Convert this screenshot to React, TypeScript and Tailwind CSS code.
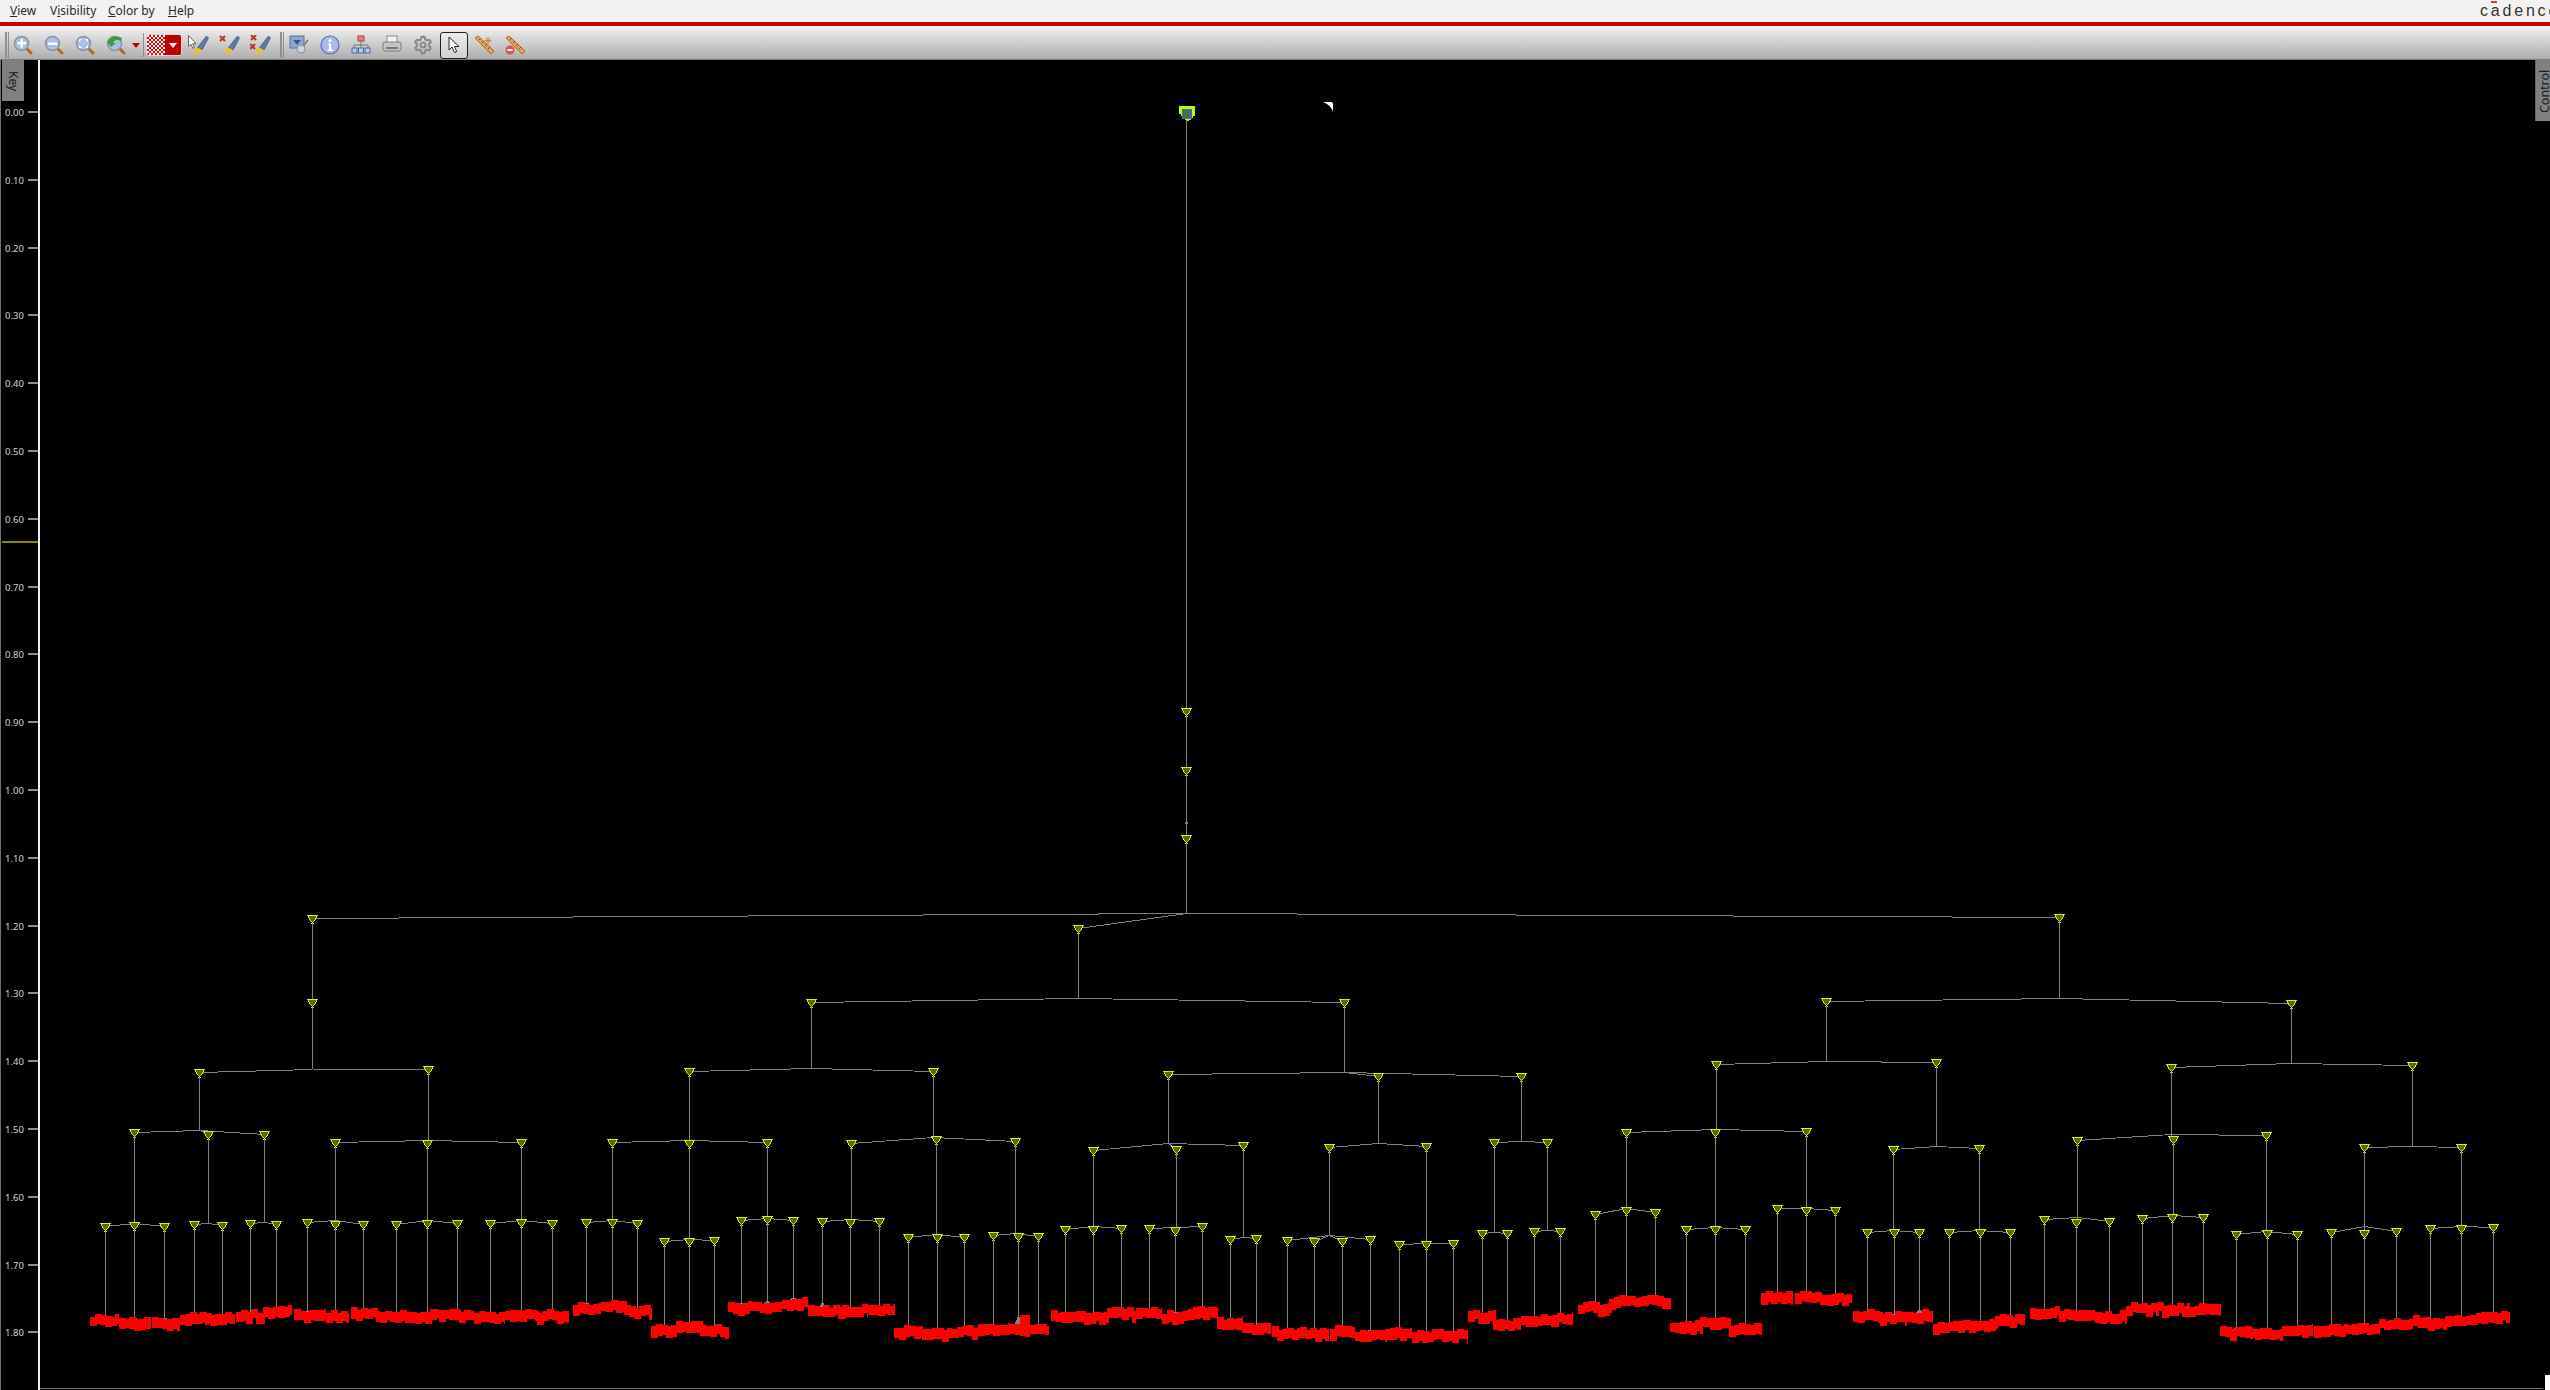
import { Settings } from "lucide-react"

type Leaf = { top: number; a: number; b: number; ry: number }
type TreeNode = { x: number; y: number; j?: number; kids?: TreeNode[]; leaf?: Leaf }

const n = (x: number, y: number, j: number, kids: TreeNode[]): TreeNode => ({ x, y, j, kids })
const l = (x: number, y: number, top: number, a: number, b: number, ry: number): TreeNode => ({
  x,
  y,
  leaf: { top, a, b, ry },
})

// clock tree, all coordinates are page pixels read off the screenshot
const tree: TreeNode = n(1186, 112, 708, [
  n(1186, 712, 767, [
    n(1186, 771, 835, [
      n(1186, 839, 913, [
        n(312, 919, 999, [
          n(312, 1003, 1069, [
            n(199, 1073, 1130, [
              n(134, 1133, 1223, [
                l(105, 1227, 1315, 90, 119, 1320),
                l(134, 1226, 1317, 119, 151, 1323),
                l(164, 1227, 1317, 152, 180, 1323),
              ]),
              n(208, 1135, 1223, [l(194, 1225, 1315, 180, 209, 1318), l(222, 1226, 1314, 205, 235, 1319)]),
              n(264, 1135, 1222, [l(250, 1224, 1312, 236, 265, 1316), l(276, 1225, 1308, 263, 292, 1312)]),
            ]),
            n(428, 1070, 1140, [
              n(335, 1143, 1220, [
                l(307, 1223, 1311, 294, 326, 1315),
                l(335, 1225, 1312, 326, 349, 1316),
                l(363, 1225, 1311, 351, 380, 1314),
              ]),
              n(427, 1144, 1220, [
                l(396, 1225, 1312, 380, 410, 1316),
                l(427, 1224, 1313, 410, 439, 1316),
                l(457, 1224, 1310, 439, 474, 1315),
              ]),
              n(521, 1143, 1220, [
                l(490, 1224, 1313, 474, 505, 1317),
                l(521, 1223, 1312, 505, 539, 1315),
                l(552, 1224, 1312, 537, 569, 1316),
              ]),
            ]),
          ]),
        ]),
        n(1078, 929, 998, [
          n(811, 1003, 1068, [
            n(689, 1072, 1140, [
              n(612, 1143, 1220, [
                l(586, 1223, 1302, 573, 601, 1308),
                l(612, 1223, 1302, 601, 627, 1306),
                l(637, 1224, 1308, 624, 652, 1312),
              ]),
              n(689, 1144, 1239, [
                l(664, 1242, 1325, 651, 677, 1330),
                l(689, 1242, 1323, 676, 703, 1327),
                l(714, 1241, 1326, 700, 729, 1331),
              ]),
              n(767, 1143, 1218, [
                l(741, 1221, 1302, 728, 752, 1307),
                l(767, 1220, 1300, 750, 782, 1307),
                l(793, 1221, 1297, 782, 808, 1303),
              ]),
            ]),
            n(933, 1072, 1137, [
              n(851, 1144, 1219, [
                l(822, 1222, 1302, 808, 847, 1312),
                l(850, 1223, 1306, 842, 868, 1311),
                l(879, 1222, 1306, 868, 895, 1311),
              ]),
              n(936, 1140, 1234, [
                l(908, 1238, 1327, 894, 923, 1331),
                l(937, 1238, 1328, 922, 952, 1333),
                l(964, 1238, 1326, 952, 978, 1332),
              ]),
              n(1015, 1142, 1233, [
                l(993, 1236, 1327, 978, 1010, 1330),
                l(1018, 1237, 1315, 1010, 1030, 1330),
                l(1038, 1237, 1324, 1030, 1049, 1329),
              ]),
            ]),
          ]),
          n(1344, 1003, 1072, [
            n(1168, 1075, 1143, [
              n(1093, 1151, 1226, [
                l(1065, 1230, 1312, 1051, 1079, 1316),
                l(1093, 1230, 1312, 1079, 1109, 1317),
                l(1121, 1229, 1311, 1107, 1136, 1314),
              ]),
              n(1176, 1150, 1227, [
                l(1149, 1229, 1310, 1136, 1162, 1314),
                l(1175, 1231, 1311, 1162, 1188, 1317),
                l(1202, 1227, 1309, 1188, 1218, 1312),
              ]),
              n(1243, 1146, 1237, [l(1230, 1240, 1319, 1217, 1243, 1323), l(1256, 1239, 1325, 1242, 1271, 1329)]),
            ]),
            n(1378, 1077, 1143, [
              n(1329, 1148, 1235, [
                l(1287, 1241, 1329, 1272, 1300, 1333),
                l(1314, 1242, 1329, 1300, 1329, 1334),
                l(1342, 1242, 1327, 1330, 1355, 1332),
                l(1370, 1240, 1329, 1355, 1387, 1335),
              ]),
              n(1426, 1147, 1243, [
                l(1399, 1245, 1330, 1385, 1412, 1333),
                l(1426, 1245, 1330, 1412, 1437, 1336),
                l(1453, 1244, 1331, 1437, 1468, 1335),
              ]),
            ]),
            n(1521, 1077, 1141, [
              n(1494, 1143, 1232, [l(1482, 1234, 1313, 1468, 1496, 1317), l(1507, 1234, 1320, 1493, 1521, 1325)]),
              n(1547, 1143, 1230, [l(1534, 1232, 1317, 1521, 1553, 1321), l(1560, 1232, 1315, 1552, 1573, 1319)]),
            ]),
          ]),
        ]),
        n(2059, 918, 998, [
          n(1826, 1002, 1061, [
            n(1716, 1065, 1129, [
              n(1626, 1133, 1208, [
                l(1595, 1215, 1303, 1578, 1612, 1308),
                l(1626, 1211, 1298, 1609, 1643, 1302),
                l(1655, 1213, 1297, 1642, 1671, 1302),
              ]),
              n(1715, 1133, 1227, [
                l(1686, 1230, 1321, 1670, 1703, 1327),
                l(1715, 1230, 1318, 1700, 1731, 1323),
                l(1745, 1230, 1323, 1729, 1762, 1329),
              ]),
              n(1806, 1132, 1208, [
                l(1777, 1209, 1295, 1761, 1793, 1298),
                l(1806, 1211, 1293, 1795, 1822, 1298),
                l(1835, 1211, 1296, 1822, 1852, 1300),
              ]),
            ]),
            n(1936, 1063, 1146, [
              n(1893, 1150, 1230, [
                l(1867, 1233, 1312, 1853, 1883, 1316),
                l(1894, 1233, 1313, 1880, 1907, 1318),
                l(1919, 1233, 1309, 1907, 1933, 1316),
              ]),
              n(1979, 1149, 1230, [
                l(1949, 1233, 1322, 1933, 1966, 1327),
                l(1980, 1233, 1323, 1964, 1998, 1326),
                l(2010, 1233, 1315, 1995, 2025, 1320),
              ]),
            ]),
          ]),
          n(2291, 1004, 1063, [
            n(2171, 1068, 1134, [
              n(2077, 1141, 1217, [
                l(2044, 1220, 1308, 2030, 2060, 1313),
                l(2076, 1223, 1313, 2059, 2095, 1316),
                l(2109, 1222, 1313, 2095, 2127, 1317),
              ]),
              n(2173, 1140, 1215, [
                l(2142, 1219, 1304, 2126, 2159, 1309),
                l(2172, 1218, 1304, 2157, 2190, 1309),
                l(2203, 1218, 1305, 2189, 2221, 1310),
              ]),
              n(2266, 1136, 1231, [
                l(2236, 1235, 1327, 2220, 2253, 1332),
                l(2267, 1234, 1329, 2250, 2283, 1334),
                l(2297, 1235, 1327, 2282, 2313, 1330),
              ]),
            ]),
            n(2412, 1066, 1146, [
              n(2364, 1148, 1226, [
                l(2331, 1233, 1326, 2314, 2348, 1330),
                l(2364, 1234, 1323, 2347, 2380, 1328),
                l(2396, 1232, 1320, 2379, 2413, 1325),
              ]),
              n(2461, 1148, 1226, [
                l(2430, 1229, 1319, 2413, 2447, 1322),
                l(2461, 1229, 1317, 2445, 2478, 1321),
                l(2493, 1228, 1312, 2476, 2510, 1317),
              ]),
            ]),
          ]),
        ]),
      ]),
    ]),
  ]),
])

const nodes: TreeNode[] = []
const walk = (t: TreeNode) => {
  nodes.push(t)
  t.kids?.forEach(walk)
}
walk(tree)

const rand = (i: number) => {
  const v = Math.sin(i * 12.9898) * 43758.5453
  return v - Math.floor(v)
}

const ticks = Array.from({ length: 19 }, (_, i) => i)

// 9x9 buffer marker, pixel rows like the original raster symbol
function BufferMark({ x, y }: { x: number; y: number }) {
  const left = x - 4
  const top = y - 4
  return (
    <g>
      <path d={`M${left} ${top + 1}h9v2h-1v2h-1v1h-1v1h-3v-1h-1v-1h-1v-2h-1z`} fill="#556b00" />
      <path
        d={`M${left - 1} ${top}h11v1h-11zM${left} ${top + 1}h1v2h-1zM${left + 8} ${top + 1}h1v2h-1zM${left + 1} ${top + 3}h1v2h-1zM${left + 7} ${top + 3}h1v2h-1zM${left + 2} ${top + 5}h1v1h-1zM${left + 6} ${top + 5}h1v1h-1zM${left + 3} ${top + 6}h1v1h-1zM${left + 5} ${top + 6}h1v1h-1zM${left + 4} ${top + 7}h1v1h-1zM${left + 3} ${top + 8}h1v1h-1zM${left + 5} ${top + 8}h1v1h-1z`}
        fill="#c8ff00"
      />
    </g>
  )
}

function RedBand({ a, b, ry, seed }: { a: number; b: number; ry: number; seed: number }) {
  const cols = []
  for (let cx = a, i = 0; cx < b; cx += 5, i++) {
    const off = Math.round(rand(seed + i) * 4 - 2)
    const h = 9 + Math.round(rand(seed + i * 3 + 7) * 3)
    cols.push(<rect key={cx} x={cx} y={ry - 5 + off} width={Math.min(7, b - cx)} height={h} />)
  }
  return <g fill="#ff0000">{cols}</g>
}

function ClockTree() {
  return (
    <svg className="block absolute inset-0" width={2550} height={1330} viewBox="0 60 2550 1330">
      {/* axis */}
      <rect x={0} y={60} width={1} height={1330} fill="#707070" />
      <rect x={38} y={60} width={2} height={1330} fill="#f0f0f0" />
      <rect x={2} y={541} width={36} height={2} fill="#8a8a00" />
      <rect x={40} y={1388} width={2503} height={1} fill="#707070" />
      {ticks.map((i) => {
        const y = Math.round(112 + i * 67.8)
        return (
          <g key={i}>
            <rect x={28} y={y - 1} width={10} height={2} fill="#8c8c8c" />
            <text x={5} y={y + 3.5} fontSize={9.5} fill="#d4d4d4" fontFamily="'Noto Sans', sans-serif">
              {(i / 10).toFixed(2)}
            </text>
          </g>
        )
      })}

      <g shapeRendering="crispEdges">
        {/* wires */}
        <g stroke="#808080" strokeWidth={1}>
          {nodes.map((t, i) =>
            t.kids ? (
              <g key={i}>
                <line x1={t.x + 0.5} y1={t.y} x2={t.x + 0.5} y2={t.j} />
                {t.kids.map((k, m) => (
                  <line key={m} x1={t.x + 0.5} y1={(t.j as number) + 0.5} x2={k.x + 0.5} y2={k.y - (k.x === t.x ? 4 : 0.5)} />
                ))}
              </g>
            ) : (
              <line key={i} x1={t.x + 0.5} y1={t.y} x2={t.x + 0.5} y2={t.leaf?.top} />
            ),
          )}
        </g>

        {/* flops */}
        {nodes.map((t, i) =>
          t.leaf ? (
            <g key={i}>
              <polygon
                points={`${t.x - 5},${t.leaf.ry - 2} ${t.x + 0.5},${t.leaf.top} ${t.x + 6},${t.leaf.ry - 2}`}
                fill="#808080"
              />
              <RedBand a={t.leaf.a} b={t.leaf.b} ry={t.leaf.ry} seed={t.x} />
            </g>
          ) : null,
        )}
        <rect x={1020} y={1315} width={10} height={12} fill="#ff0000" />
        <rect x={1185} y={822} width={3} height={2} fill="#808080" />

        {nodes.slice(1).map((t, i) => (
          <BufferMark key={i} x={t.x} y={t.y} />
        ))}

        {/* root */}
        <path d="M1179 106h16v10h-2v2h-2v2h-2v1h-2v-1h-2v-2h-2v-2h-2v-2h-2z" fill="#b4ff00" />
        <rect x={1182} y={109} width={9} height={9} fill="#4c6a5c" stroke="#3f68c0" strokeWidth={1} />
      </g>

      {/* stray pointer mark */}
      <path d="M1323 102h8q2 0 2 2v8q-2-7-10-10z" fill="#ffffff" />
    </svg>
  )
}

function Mag({ children }: { children?: React.ReactNode }) {
  return (
    <svg width={20} height={20} viewBox="0 0 20 20">
      <line x1={12.5} y1={12.5} x2={18} y2={18} stroke="#b8681e" strokeWidth={3} strokeLinecap="round" />
      <circle cx={8.5} cy={8.5} r={7} fill="#a9c0e4" stroke="#8d939e" strokeWidth={1.5} />
      {children}
    </svg>
  )
}

function PenBody() {
  return (
    <g>
      <path d="M18.5 1 L20.5 3 L14 15 L9.5 12.5 Z" fill="#5f78a8" stroke="#3d5078" strokeWidth={0.7} />
      <path d="M9.5 12.5 L14 15 L10 18 L4 20 Z" fill="#f4c20d" />
    </g>
  )
}

const Cross = ({ x, y }: { x: number; y: number }) => (
  <path d={`M${x} ${y}l5 5m0-5l-5 5`} stroke="#b83a2c" strokeWidth={2.2} fill="none" />
)

function Ruler({ minus }: { minus?: boolean }) {
  return (
    <svg width={21} height={20} viewBox="0 0 21 20">
      <path d="M1 3 L4 1 L20 16 L17 19 Z" fill="#e0a060" stroke="#b8681e" strokeWidth={1} />
      <path d="M5 5l2-2M8 8l2-2M11 11l2-2M14 14l2-2" stroke="#8a4a12" strokeWidth={1} />
      {minus ? (
        <g>
          <circle cx={5} cy={15} r={4.5} fill="#d9534f" />
          <rect x={2.5} y={14} width={5} height={2} fill="#ffffff" />
        </g>
      ) : (
        <path d="M14 2v7M10.5 5.5h7M11.5 3l5 5M16.5 3l-5 5" stroke="#d8722a" strokeWidth={0.8} />
      )}
    </svg>
  )
}

function Grip() {
  return (
    <div className="flex gap-[1px] h-[26px] w-[4px]">
      <div className="w-[1.5px] bg-[#8f8f8f]" />
      <div className="w-[1.5px] bg-[#8f8f8f]" />
    </div>
  )
}

function Toolbar() {
  return (
    <div className="flex items-center h-[34px] pt-[5px] bg-gradient-to-b from-[#f2f2f2] to-[#aeaeae] border-b border-[#7a7a7a]">
      <div className="flex items-center gap-[11px] ml-[5px] w-[271px] shrink-0">
        <div className="-mr-[7px]">
          <Grip />
        </div>
        <Mag>
          <path d="M4.5 7h3V4h2.5v3h3v2.5h-3v3H7.5v-3h-3z" fill="#ffffff" />
        </Mag>
        <Mag>
          <rect x={4} y={7.5} width={9} height={2.5} fill="#ffffff" />
        </Mag>
        <Mag>
          <path d="M4 4h3L4 7zM13 4v3l-3-3zM4 13v-3l3 3zM13 13h-3l3-3z" fill="#ffffff" />
        </Mag>
        <Mag>
          <path d="M2 6 Q7 -1 16 3 L15 6 Q9 3 7 8 L10 8 L5 12 L1 7 Z" fill="#3f9a3a" />
        </Mag>
        <div className="flex items-center gap-[2px] -ml-[5px] -mr-[9px]">
          <svg width={8} height={5} viewBox="0 0 8 5">
            <path d="M0 0h8L4 5z" fill="#c00000" />
          </svg>
          <div className="w-[1px] h-[24px] bg-[#8f8f8f] ml-[1px]" />
        </div>
        <div className="flex w-[36px] h-[22px] rounded-[3px] overflow-hidden border border-[#d8d8d8] -mr-[5px]">
          <div className="flex-1 bg-[repeating-conic-gradient(#e60000_0_25%,#ffffff_0_50%)] bg-[length:4px_4px]" />
          <div className="w-[16px] bg-[#c00000] flex items-center justify-center">
            <svg width={8} height={5} viewBox="0 0 8 5">
              <path d="M0 0h8L4 5z" fill="#ffffff" />
            </svg>
          </div>
        </div>
        <svg width={21} height={20} viewBox="0 0 21 20" className="-mr-[1px]">
          <path d="M0.5 0.5v11l2.5-2.2 2 4 1.6-.8-2-3.8h3.4z" fill="#ffffff" stroke="#444444" strokeWidth={0.8} />
          <PenBody />
        </svg>
        <svg width={21} height={20} viewBox="0 0 21 20" className="-mr-[1px]">
          <Cross x={1} y={1} />
          <PenBody />
        </svg>
        <svg width={21} height={20} viewBox="0 0 21 20">
          <Cross x={1} y={0} />
          <Cross x={0} y={9} />
          <PenBody />
        </svg>
      </div>
      <div className="flex items-center gap-[11px] ml-[4px]">
        <Grip />
        <svg width={20} height={20} viewBox="0 0 20 20" className="-ml-[6px]">
          <rect x={1} y={1} width={14} height={12} fill="#8ea6d0" stroke="#5a6f9a" />
          <path d="M4 5h8L8 10z" fill="#3e5a90" />
          <circle cx={12} cy={14} r={4} fill="#c9d6e8" stroke="#8d939e" />
          <path d="M15 10l4-5" stroke="#9a7040" strokeWidth={1.5} />
        </svg>
        <svg width={20} height={20} viewBox="0 0 20 20">
          <circle cx={10} cy={10} r={9} fill="#a9b9e8" stroke="#5a6fb8" strokeWidth={1.2} />
          <circle cx={10} cy={5.5} r={1.6} fill="#ffffff" />
          <path d="M8 8.5h3.2v6H13v1.5H7.5v-1.5H9v-4.5H8z" fill="#ffffff" />
        </svg>
        <svg width={20} height={20} viewBox="0 0 20 20">
          <path d="M10 6v4M3 13v-3h14v3M10 10v3" stroke="#777777" fill="none" />
          <rect x={7} y={1} width={6} height={5} fill="#e08080" stroke="#b83a3a" />
          <rect x={1} y={13} width={5} height={5} fill="#b9cbe6" stroke="#4f6a9a" />
          <rect x={7.5} y={13} width={5} height={5} fill="#b9cbe6" stroke="#4f6a9a" />
          <rect x={14} y={13} width={5} height={5} fill="#b9cbe6" stroke="#4f6a9a" />
        </svg>
        <svg width={20} height={20} viewBox="0 0 20 20">
          <rect x={5} y={1} width={10} height={7} fill="#f4f4f4" stroke="#8a8a8a" />
          <rect x={1} y={7} width={18} height={9} rx={2} fill="#c4c4c4" stroke="#7a7a7a" />
          <rect x={4} y={12} width={12} height={2} fill="#7a7a7a" />
        </svg>
        <Settings size={20} strokeWidth={2.6} color="#8a8a8a" />
        <div className="w-[28px] h-[27px] -mx-[4px] rounded-[3px] border border-[#222222] bg-gradient-to-b from-[#ececec] to-[#d0d0d0] flex items-center justify-center">
          <svg width={12} height={18} viewBox="0 0 12 18">
            <path d="M1 1v13l3-3 2.5 5.5 2.2-1L6.5 10.5H11z" fill="#ffffff" stroke="#222222" strokeWidth={1} />
          </svg>
        </div>
        <div className="flex items-center gap-[10px] -ml-[1px]">
          <Ruler />
          <Ruler minus />
        </div>
      </div>
    </div>
  )
}

function MenuBar() {
  return (
    <div className="flex items-center h-[22px] bg-[#f2f2f2] pl-[10px] text-[12px] text-[#2a2a2a] font-['Noto_Sans',sans-serif] overflow-hidden">
      <span className="w-[40px]">
        <u>V</u>iew
      </span>
      <span className="w-[58px]">
        V<u>i</u>sibility
      </span>
      <span className="w-[60px]">
        <u>C</u>olor by
      </span>
      <span>
        <u>H</u>elp
      </span>
      <div className="relative ml-auto w-[70px] overflow-hidden whitespace-nowrap text-[16px] tracking-[2.8px] text-[#333333] font-['Liberation_Sans',sans-serif]">
        cadence
        <div className="absolute left-[11px] top-[2px] w-[6px] h-[2px] bg-[#d04040]" />
      </div>
    </div>
  )
}

export default function App() {
  return (
    <div className="flex flex-col w-[2550px] h-[1390px] overflow-hidden bg-black">
      <MenuBar />
      <div className="h-[4px] bg-[#cc0000]" />
      <Toolbar />
      <div className="relative flex-1 bg-black overflow-hidden">
        <ClockTree />
        <div className="absolute left-[2px] top-0 w-[22px] h-[41px] bg-[#808080] flex items-center justify-center">
          <span className="rotate-90 text-[12px] text-[#1a1a1a] font-['Noto_Sans',sans-serif]">Key</span>
        </div>
        <div className="absolute right-0 top-0 w-[15px] h-[61px] bg-[#808080] border-l border-[#666666] overflow-hidden">
          <span className="absolute left-[-12px] top-[22px] -rotate-90 text-[12.5px] text-[#1a1a1a] font-['Noto_Sans',sans-serif]">
            Control
          </span>
        </div>
        <div className="absolute right-0 bottom-0 w-[5px] h-[15px] bg-white" />
      </div>
    </div>
  )
}
